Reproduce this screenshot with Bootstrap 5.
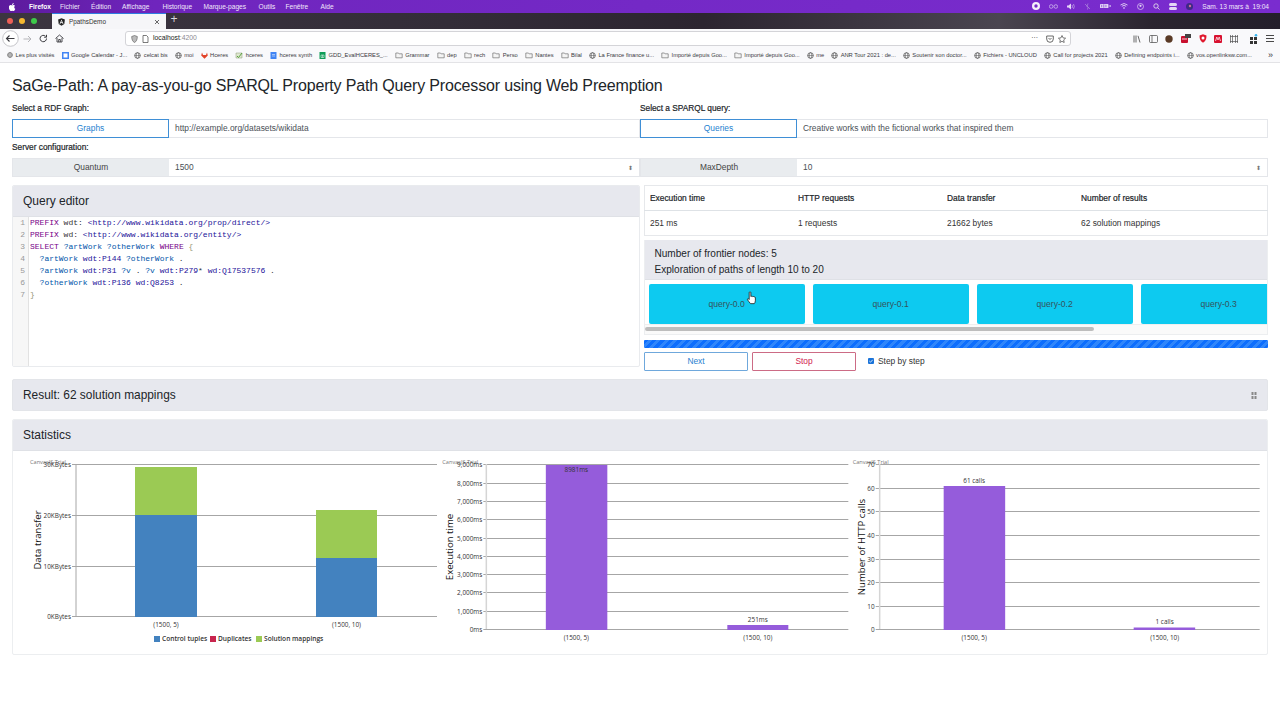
<!DOCTYPE html>
<html lang="en">
<head>
<meta charset="utf-8">
<title>PpathsDemo</title>
<link href="https://cdn.jsdelivr.net/npm/bootstrap@5.3.0/dist/css/bootstrap.min.css" rel="stylesheet">
<style>
html,body{height:720px;overflow:hidden;background:#fff}
body{font-family:"Liberation Sans",Arial,sans-serif;font-size:8.4px;color:#212529}
.mac-bar{height:13px;background:linear-gradient(90deg,#5c1a9c 0,#6f25bd 12%,#7429c6 50%,#7a2ccf 100%);color:#f0e6fb;font-size:6.6px;padding:0 9px;font-weight:500}
.mac-menu span{display:block}
.mac-menu .m1{width:31px;font-weight:700;color:#fff}
.mac-menu .m2{width:31px}.mac-menu .m3{width:40.5px}.mac-menu .m4{width:41px}.mac-menu .m5{width:55px}.mac-menu .m6{width:27px}.mac-menu .m7{width:35px}
.apple{width:20px}
.mac-status{gap:9px;padding-right:2px}
.mac-status svg{display:block}
.tab-strip{height:16px;background:linear-gradient(90deg,#3c3540 0,#332d38 35%,#2c2530 55%,#4a4550 78%,#2b2530 90%,#241f2b 100%)}
.lights{width:52px;padding-left:7px;gap:6px}
.lights i{display:block;width:6px;height:6px;border-radius:50%}
.l-r{background:#ed5f57}.l-y{background:#f5b72f}.l-g{background:#3ec94a}
.tab-on{width:114px;height:16px;background:#f6f6f8;border-top:1px solid #2e7ce0;color:#333;font-size:6.4px;padding:0 6px;gap:4px}
.tab-plus{color:#d8d8dc;font-size:12px;line-height:1;width:16px;text-align:center}
.tool-strip{height:19px;background:#f9f9fb;padding:0 0 0 2px}
.tool-left{gap:7px;width:123px}
.tool-left .back-btn{margin-right:-3px}
.url-field{height:15px;width:946px;border:1px solid #d4d4d8;border-radius:3px;background:#fff;font-size:6.8px;color:#222;padding:0 4px 0 5px;gap:4px}
.url-field b{font-weight:400;color:#8a8a8f}
.tool-right{gap:7.6px;margin-left:auto;padding-right:6px}
.book-strip{height:15px;background:#f9f9fb;border-bottom:1px solid #e3e3e6;font-size:5.75px;color:#39393f;padding:0 7px;gap:7px;white-space:nowrap;overflow:hidden}
.book-strip>span{display:flex;align-items:center;gap:2.5px}
.book-strip .more{margin-left:auto;font-size:9px;line-height:1}
.app-page{padding:0 12px}
.app-title{font-size:16px;letter-spacing:-.16px;font-weight:400;margin:0;height:40px;line-height:45px;color:#212529}
.lbl{font-size:8.3px;font-weight:500;color:#212529;height:12px;line-height:11px;-webkit-text-stroke:.2px #212529}
.field-row{height:19px}
.box-btn{width:157px;height:19px;background:#fff;color:#1f7fd0;border:1px solid #3f8fd6;display:flex;align-items:center;justify-content:center}
.box-gray{background:#e9ecef;color:#444;border:1px solid #e4e6ea;border-right:0}
.box-val{flex:1;height:19px;border:1px solid #e4e6ea;border-left:0;padding:0 6px;display:flex;align-items:center;color:#4a5056;justify-content:space-between}
.half{width:628px}
.arrows{color:#777;font-size:6px;line-height:1}
.gap-lbl{margin-top:4px}
.lbl-after{margin-bottom:4px}
.main-grid{margin-top:8px;gap:4px}
.pane-left{width:628px;height:182px;border:1px solid #e9ebee;border-radius:2px;overflow:hidden}
.pane-head{background:#e7e8ee;font-size:12px;color:#212529;border-bottom:1px solid #dfe1e6;height:31px;line-height:31px;padding:0 10px}
.code-wrap{height:150px}
.code-nums{width:16px;background:#f7f7f7;border-right:1px solid #e2e2e2;color:#999;text-align:right;padding:0 3px 0 0}
.code-nums,.code-text{font-family:"Liberation Mono",monospace;font-size:8px;line-height:12px}
.code-text{padding:0 0 0 1px;white-space:pre;color:#333}
.k{color:#770088}.u{color:#221199}.v{color:#0055aa}.a{color:#221199}.br{color:#999977}
.pane-right{width:624px}
.stat-table{margin:0;height:51px;border:1px solid #e6e8eb;table-layout:fixed;width:100%}
.stat-table th,.stat-table td{padding:0 0 0 5px;vertical-align:middle;border:0;font-size:8.4px}
.stat-table th{height:25px;font-weight:500;-webkit-text-stroke:.2px #212529;border-bottom:1px solid #dee2e6}
.stat-table td{height:25px;color:#333}
.c1{width:148.5px}.c2{width:149px}.c3{width:134px}
.front-box{margin-top:4px;border:1px solid #eceef0;border-top:0;height:95px;overflow:hidden}
.front-head{height:40px;background:#e7e8ee;padding:5.5px 9.5px;font-size:10.05px;line-height:16px;color:#212529;border-bottom:1px solid #dfe1e6}
.q-row{gap:8px;padding:4px 4px 0 3.6px;overflow:hidden;height:44px}
.q-btn{flex:0 0 156px;height:40px;background:#0dcaf0;border-radius:2px;color:#35535c;font-size:8.6px;border:0;padding:0}
.scroll-track{height:10px;background:#fafafa;border-top:1px solid #efefef;padding:1.5px 1px 1.5px 0}
.scroll-thumb{width:449px;height:4px;background:#bdbdbd;border-radius:2px}
.prog{height:8px;margin-top:5px;border-radius:1px;background-color:#0d6efd;background-image:repeating-linear-gradient(135deg,#0d6efd 0 3px,#2f86fb 3px 6px)}
.ctl-row{margin-top:4px;height:19px}
.ctl-btn{width:104px;height:19px;padding:0;font-size:8.4px;border-radius:1px;background:#fff}
.b-next{color:#1f7fd0;border:1px solid #6fa8dc}
.b-stop{color:#d1224f;border:1px solid #cc6b85;margin-left:4px}
.chk{margin-left:12px;gap:4px;color:#333}
.wide-card{border:1px solid #eceef0;border-radius:2px}
.result-card{margin-top:8px;height:32px;background:#e7e8ee;padding:1px 10px 0;font-size:11.9px;border-color:#e3e5e9}
.stats-card{margin-top:8px;height:236px;overflow:hidden}
.stats-card .pane-head{line-height:30px}
.chart-row{padding:0 6px 0 16px;height:204px}
.chart-cell{width:33.333%}
.chart-cell svg{display:block;overflow:visible}
.t6{font-family:"Open Sans","DejaVu Sans",sans-serif;font-size:6.4px;fill:#333}
.tr{font-family:"Open Sans",sans-serif;font-size:5.6px;fill:#777}
.tl{font-family:"Open Sans",sans-serif;font-size:9.6px;fill:#111}
.tb{font-family:"Open Sans",sans-serif;font-size:6.6px;font-weight:600;fill:#333}
.grid-l{stroke:#a6a6a6;stroke-width:1}
</style>
</head>
<body>
<svg width="0" height="0" class="position-absolute">
<defs>
<symbol id="globe" viewBox="0 0 10 10"><circle cx="5" cy="5" r="4" fill="none" stroke="#444" stroke-width="1"/><ellipse cx="5" cy="5" rx="1.8" ry="4" fill="none" stroke="#444" stroke-width=".7"/><path d="M1 5h8" stroke="#444" stroke-width=".7"/></symbol>
<symbol id="folder" viewBox="0 0 10 10"><path d="M1 2.5h3l1 1h4v5H1z" fill="#f4f4f4" stroke="#666" stroke-width=".8"/></symbol>
</defs>
</svg>

<div class="mac-bar d-flex align-items-center justify-content-between">
  <div class="mac-menu d-flex align-items-center">
    <span class="apple"><svg width="7" height="8" viewBox="0 0 14 16"><path d="M10.5 8.5c0-2 1.6-2.9 1.7-3-1-1.4-2.4-1.6-2.9-1.6-1.2-.1-2.4.7-3 .7s-1.600-.7-2.600-.7C2.300 4 1 4.800.3 6c-1.400 2.400-.4 6 1 8 .7 1 1.500 2 2.500 2s1.400-.6 2.600-.6 1.600.6 2.700.6 1.800-1 2.400-2c.8-1.100 1.100-2.200 1.100-2.300-.1 0-2.100-.8-2.100-3.200zM8.600 2.600C9.100 2 9.500 1 9.400 0c-.9 0-1.900.6-2.500 1.300-.5.6-1 1.600-.9 2.500 1 .1 2-.5 2.600-1.200z" fill="#fff"/></svg></span>
    <span class="m1">Firefox</span><span class="m2">Fichier</span><span class="m2">Édition</span><span class="m3">Affichage</span><span class="m4">Historique</span><span class="m5">Marque-pages</span><span class="m6">Outils</span><span class="m7">Fenêtre</span><span>Aide</span>
  </div>
  <div class="mac-status d-flex align-items-center">
    <svg width="8" height="8" viewBox="0 0 8 8"><circle cx="4" cy="4" r="4" fill="#f4f0fa"/><circle cx="4" cy="4" r="1.700" fill="#7429c6"/></svg>
    <svg width="9" height="6" viewBox="0 0 9 6"><circle cx="2.200" cy="3.500" r="1.800" fill="none" stroke="#d9c8f0" stroke-width=".7"/><circle cx="6.800" cy="3.500" r="1.800" fill="none" stroke="#d9c8f0" stroke-width=".7"/></svg>
    <svg width="8" height="7" viewBox="0 0 8 7"><path d="M0 2.500h1.500L4 .5v6L1.500 4.500H0z" fill="#e3d6f5"/><path d="M5 2q1 1.500 0 3M6.500 1q1.500 2.500 0 5" stroke="#d9c8f0" stroke-width=".6" fill="none"/></svg>
    <svg width="7" height="7" viewBox="0 0 7 7"><path d="M1 1l5 5M4 0.500L3 3.500l1 1-.500 2" stroke="#b89ae0" stroke-width=".6" fill="none"/></svg>
    <svg width="11" height="6" viewBox="0 0 13 6"><rect x="0" y="0.500" width="10" height="5" rx="1" fill="#e3d6f5"/><path d="M2 1.500v3M4.500 1v4M7 1.500v3" stroke="#7429c6" stroke-width=".8"/><path d="M11 2h2v2h-2z" fill="#cdb8ec"/></svg>
    <svg width="8" height="6" viewBox="0 0 8 6"><path d="M.5 2q3.500-3 7 0M1.800 3.300q2.200-1.800 4.400 0" stroke="#f0e8fa" stroke-width=".8" fill="none"/><circle cx="4" cy="5" r=".8" fill="#f0e8fa"/></svg>
    <svg width="7" height="7" viewBox="0 0 7 7"><circle cx="3.500" cy="3.500" r="3" fill="none" stroke="#e3d6f5" stroke-width=".7"/><circle cx="3.500" cy="2.800" r="1.100" fill="#e3d6f5"/></svg>
    <svg width="7" height="7" viewBox="0 0 7 7"><circle cx="3" cy="3" r="2.200" fill="none" stroke="#eee" stroke-width=".8"/><path d="M4.700 4.700L6.500 6.500" stroke="#eee" stroke-width=".8"/></svg>
    <svg width="8" height="7" viewBox="0 0 8 7"><rect x="0" y="0" width="8" height="3" rx="1.500" fill="#e3d6f5"/><rect x="0" y="4" width="8" height="3" rx="1.500" fill="#e3d6f5"/></svg>
    <svg width="7" height="7" viewBox="0 0 7 7"><circle cx="3.500" cy="3.500" r="3.500" fill="#3d2a85"/><circle cx="4" cy="3" r="1.200" fill="#d06a9a"/></svg>
    <span>Sam. 13 mars à&nbsp; 19:04</span>
  </div>
</div>

<div class="tab-strip d-flex">
  <div class="lights d-flex align-items-center"><i class="l-r"></i><i class="l-y"></i><i class="l-g"></i></div>
  <div class="tab-on d-flex align-items-center">
    <svg width="7" height="8" viewBox="0 0 10 11"><path d="M5 0L.2 1.800 1 8.200 5 11l4-2.800.8-6.400z" fill="#222"/><path d="M5 2L2.200 8.300h1l.6-1.400h2.400l.6 1.400h1zM4.200 6L5 4l.8 2z" fill="#fff"/></svg>
    <span class="flex-grow-1">PpathsDemo</span>
    <svg width="6" height="6" viewBox="0 0 6 6"><path d="M1 1l4 4M5 1L1 5" stroke="#444" stroke-width=".8"/></svg>
  </div>
  <div class="tab-plus">+</div>
</div>

<div class="tool-strip d-flex align-items-center">
  <div class="tool-left d-flex align-items-center">
    <svg class="back-btn" width="17" height="17" viewBox="0 0 17 17"><circle cx="8.500" cy="8.500" r="7.800" fill="#fff" stroke="#b8b8bc" stroke-width=".8"/><path d="M12.500 8.500h-8M7.500 5.500l-3 3 3 3" fill="none" stroke="#3a3a3f" stroke-width="1.100"/></svg>
    <svg width="9" height="8" viewBox="0 0 9 8"><path d="M.5 4h7.500M5 1l3 3-3 3" fill="none" stroke="#b5b5b9" stroke-width="1"/></svg>
    <svg width="9" height="9" viewBox="0 0 9 9"><path d="M7.500 4.500a3.200 3.200 0 1 1-1-2.300M7.500 .8v2.400H5.100" fill="none" stroke="#3a3a3f" stroke-width="1"/></svg>
    <svg width="9" height="9" viewBox="0 0 9 9"><path d="M.5 4.500L4.500 1l4 3.500M2 4v4h5V4M3.700 8V5.500h1.600V8" fill="none" stroke="#3a3a3f" stroke-width=".9"/></svg>
  </div>
  <div class="url-field d-flex align-items-center">
    <svg width="7" height="8" viewBox="0 0 7 8"><path d="M3.500 .5L.7 1.500c0 3 .8 5 2.800 6 2-1 2.800-3 2.800-6z" fill="#bbb" stroke="#555" stroke-width=".6"/></svg>
    <svg width="7" height="8" viewBox="0 0 7 8"><path d="M1 .5h3.500L6 2v5.500H1z" fill="none" stroke="#444" stroke-width=".7"/></svg>
    <span class="flex-grow-1">localhost<b>:4200</b></span>
    <span>···</span>
    <svg class="ms-1" width="8" height="8" viewBox="0 0 8 8"><path d="M.7 1h6.600v3a3.300 3.300 0 0 1-6.600 0z" fill="none" stroke="#444" stroke-width=".8"/><path d="M2.500 3l1.500 1.500L5.500 3" fill="none" stroke="#444" stroke-width=".8"/></svg>
    <svg width="8" height="8" viewBox="0 0 8 8"><path d="M4 .5l1.100 2.400 2.500.3-1.900 1.700.5 2.600L4 6.300 1.800 7.500l.5-2.600L.4 3.200l2.500-.3z" fill="none" stroke="#444" stroke-width=".7"/></svg>
  </div>
  <div class="tool-right d-flex align-items-center">
    <svg width="8" height="8" viewBox="0 0 8 8"><path d="M1 .5v7M3 .5v7M5 .8l2 6.700" stroke="#444" stroke-width=".8"/></svg>
    <svg width="9" height="8" viewBox="0 0 9 8"><rect x=".5" y=".5" width="8" height="7" rx="1" fill="none" stroke="#444" stroke-width=".7"/><path d="M3 .5v7" stroke="#444" stroke-width=".7"/></svg>
    <svg width="8" height="8" viewBox="0 0 8 8"><circle cx="4" cy="4" r="3.700" fill="#5a3a26"/></svg>
    <svg width="10" height="10" viewBox="0 0 10 10"><rect y="2" width="7" height="7" rx="1" fill="#c8102e"/><rect x="4" y="0" width="6" height="4" fill="#444"/><path d="M1 5h5" stroke="#fff" stroke-width=".8"/></svg>
    <svg width="8" height="9" viewBox="0 0 8 9"><path d="M4 .2L.5 1.500c0 3.500 1 6 3.500 7.300 2.500-1.300 3.500-3.800 3.500-7.300z" fill="#e0182d"/><circle cx="4" cy="4" r="1.500" fill="#fff"/></svg>
    <svg width="8" height="8" viewBox="0 0 8 8"><rect width="8" height="8" rx="1" fill="#d8112f"/><path d="M1.500 6l1.300-4L4 5l1.200-3 1.300 4" fill="none" stroke="#fff" stroke-width=".7"/></svg>
    <svg width="8" height="8" viewBox="0 0 8 8"><path d="M.5 0v8M2.500 0v8M5.500 0v8M7.500 0v8M0 1.500h8M0 6.500h8" stroke="#555" stroke-width=".7"/></svg>
    <svg class="ms-1" width="9" height="10" viewBox="0 0 9 10"><rect x="1" y="3" width="3" height="3" fill="#333"/><rect x="5" y="3" width="3" height="3" fill="#333"/><rect x="1" y="7" width="3" height="3" fill="#333"/><rect x="5" y="7" width="3" height="3" fill="#333"/><circle cx="7" cy="1.300" r="1.300" fill="#3ab4ee"/></svg>
    <svg width="8" height="7" viewBox="0 0 8 7"><path d="M0 .5h8M0 3.500h8M0 6.500h8" stroke="#333" stroke-width=".9"/></svg>
  </div>
</div>

<div class="book-strip d-flex align-items-center">
  <span><svg width="6" height="6"><use href="#globe"/></svg>Les plus visités</span>
  <span><svg width="7" height="7" viewBox="0 0 7 7"><rect width="7" height="7" fill="#4285f4"/><rect x="1.500" y="1.500" width="4" height="4" fill="#fff"/></svg>Google Calendar - J...</span>
  <span><svg width="7" height="7"><use href="#globe"/></svg>celcat bis</span>
  <span><svg width="7" height="7"><use href="#globe"/></svg>moi</span>
  <span><svg width="7" height="7" viewBox="0 0 7 7"><path d="M3.500 6.800L.2 3.500 1 .5l1 2.500h3l1-2.500.8 3z" fill="#e24329"/></svg>Hceres</span>
  <span><svg width="8" height="7" viewBox="0 0 8 7"><path d="M1 1h6v5H1z" fill="#dfe8d0" stroke="#8a9a70" stroke-width=".5"/><path d="M2 4l1.500 1.500L7 1" fill="none" stroke="#4a9a30" stroke-width=".9"/></svg>hceres</span>
  <span><svg width="7" height="7" viewBox="0 0 7 7"><rect x=".5" width="6" height="7" fill="#4285f4"/><path d="M2 2.500h3M2 4h3" stroke="#fff" stroke-width=".5"/></svg>hceres synth</span>
  <span><svg width="7" height="7" viewBox="0 0 7 7"><rect x=".5" width="6" height="7" fill="#0f9d58"/><path d="M2 3h3v2.500H2zM3.500 3v2.500" fill="none" stroke="#fff" stroke-width=".5"/></svg>GDD_EvalHCERES_...</span>
  <span><svg width="8" height="8"><use href="#folder"/></svg>Grammar</span>
  <span><svg width="8" height="8"><use href="#folder"/></svg>dep</span>
  <span><svg width="8" height="8"><use href="#folder"/></svg>rech</span>
  <span><svg width="8" height="8"><use href="#folder"/></svg>Perso</span>
  <span><svg width="8" height="8"><use href="#folder"/></svg>Nantes</span>
  <span><svg width="8" height="8"><use href="#folder"/></svg>Bilal</span>
  <span><svg width="7" height="7"><use href="#globe"/></svg>La France finance u...</span>
  <span><svg width="8" height="8"><use href="#folder"/></svg>Importé depuis Goo...</span>
  <span><svg width="8" height="8"><use href="#folder"/></svg>Importé depuis Goo...</span>
  <span><svg width="7" height="7"><use href="#globe"/></svg>me</span>
  <span><svg width="7" height="7"><use href="#globe"/></svg>ANR Tour 2021 : de...</span>
  <span><svg width="7" height="7"><use href="#globe"/></svg>Soutenir son doctor...</span>
  <span><svg width="7" height="7"><use href="#globe"/></svg>Fichiers - UNCLOUD</span>
  <span><svg width="7" height="7"><use href="#globe"/></svg>Call for projects 2021</span>
  <span><svg width="7" height="7"><use href="#globe"/></svg>Defining endpoints i...</span>
  <span><svg width="7" height="7"><use href="#globe"/></svg>vos.openlinksw.com...</span>
  <span class="more">»</span>
</div>

<main class="app-page">
  <h1 class="app-title">SaGe-Path: A pay-as-you-go SPARQL Property Path Query Processor using Web Preemption</h1>
  <div class="d-flex">
    <div class="half">
      <div class="lbl lbl-after">Select a RDF Graph:</div>
      <div class="d-flex field-row"><div class="box-btn">Graphs</div><div class="box-val">http://example.org/datasets/wikidata</div></div>
    </div>
    <div class="half">
      <div class="lbl lbl-after">Select a SPARQL query:</div>
      <div class="d-flex field-row"><div class="box-btn">Queries</div><div class="box-val">Creative works with the fictional works that inspired them</div></div>
    </div>
  </div>
  <div class="lbl gap-lbl lbl-after">Server configuration:</div>
  <div class="d-flex">
    <div class="half d-flex field-row"><div class="box-btn box-gray">Quantum</div><div class="box-val">1500<span class="arrows">⬍</span></div></div>
    <div class="half d-flex field-row"><div class="box-btn box-gray">MaxDepth</div><div class="box-val">10<span class="arrows">⬍</span></div></div>
  </div>

  <div class="d-flex main-grid">
    <section class="pane-left">
      <div class="pane-head">Query editor</div>
      <div class="d-flex code-wrap">
        <div class="code-nums">1<br>2<br>3<br>4<br>5<br>6<br>7</div>
        <div class="code-text"><span class="k">PREFIX</span> wdt: <span class="u">&lt;http://www.wikidata.org/prop/direct/&gt;</span>
<span class="k">PREFIX</span> wd: <span class="u">&lt;http://www.wikidata.org/entity/&gt;</span>
<span class="k">SELECT</span> <span class="v">?artWork</span> <span class="v">?otherWork</span> <span class="k">WHERE</span> <span class="br">{</span>
  <span class="v">?artWork</span> <span class="a">wdt:P144</span> <span class="v">?otherWork</span> .
  <span class="v">?artWork</span> <span class="a">wdt:P31</span> <span class="v">?v</span> . <span class="v">?v</span> <span class="a">wdt:P279</span>* <span class="a">wd:Q17537576</span> .
  <span class="v">?otherWork</span> <span class="a">wdt:P136</span> <span class="a">wd:Q8253</span> .
<span class="br">}</span></div>
      </div>
    </section>
    <section class="pane-right">
      <table class="table stat-table">
        <thead><tr><th class="c1">Execution time</th><th class="c2">HTTP requests</th><th class="c3">Data transfer</th><th>Number of results</th></tr></thead>
        <tbody><tr><td>251 ms</td><td>1 requests</td><td>21662 bytes</td><td>62 solution mappings</td></tr></tbody>
      </table>
      <div class="front-box">
        <div class="front-head">Number of frontier nodes: 5<br>Exploration of paths of length 10 to 20</div>
        <div class="q-row d-flex position-relative">
          <button class="q-btn">query-0.0</button><button class="q-btn">query-0.1</button><button class="q-btn">query-0.2</button><button class="q-btn">query-0.3</button>
          <svg class="position-absolute top-0 start-0 mt-1" width="124" height="30" viewBox="0 0 124 30"><path transform="translate(102,7) scale(1.1)" d="M2 1.500c0-1 1.500-1 1.500 0v3.500l.5-.2c.6-.2 1 0 1.100.3.600-.3 1.100-.1 1.300.3.600-.2 1.100 0 1.200.5v3c0 1.200-.6 2-1 2.600H3.200C2.500 10.500 1 9 .5 8c-.4-.8.300-1.300 1-.8l.5.5z" fill="#fff" stroke="#111" stroke-width=".7"/></svg>
        </div>
        <div class="scroll-track"><div class="scroll-thumb"></div></div>
      </div>
      <div class="prog"></div>
      <div class="d-flex align-items-center ctl-row">
        <button class="btn ctl-btn b-next">Next</button>
        <button class="btn ctl-btn b-stop">Stop</button>
        <div class="d-flex align-items-center chk"><svg width="6" height="6" viewBox="0 0 6 6"><rect width="6" height="6" rx="1" fill="#1a73d9"/><path d="M1.300 3l1.200 1.200L4.700 1.800" fill="none" stroke="#fff" stroke-width=".8"/></svg><span>Step by step</span></div>
      </div>
    </section>
  </div>

  <section class="wide-card result-card d-flex align-items-center justify-content-between">
    <span>Result: 62 solution mappings</span>
    <svg width="6" height="7" viewBox="0 0 6 7"><path d="M.5 0h2v3h-2zM3.500 0h2v3h-2zM.5 4h2v3h-2zM3.500 4h2v3h-2z" fill="#888"/></svg>
  </section>

  <section class="wide-card stats-card">
    <div class="pane-head">Statistics</div>
    <div class="d-flex chart-row">
      <div class="chart-cell">
        <svg width="411" height="204" viewBox="29 451 411 204">
          <text x="30" y="463.500" class="tr">CanvasJS Trial</text>
          <path class="grid-l" d="M72 464.500H437M72 515.500H437M72 566.500H437M72 616.500H437M76 464V617"/>
          <rect x="135" y="467" width="62" height="48" fill="#9bca54"/><rect x="135" y="515" width="62" height="102" fill="#4382bf"/>
          <rect x="316" y="510" width="61" height="48" fill="#9bca54"/><rect x="316" y="558" width="61" height="59" fill="#4382bf"/>
          <g class="t6" text-anchor="end"><text x="71" y="467">30KBytes</text><text x="71" y="518">20KBytes</text><text x="71" y="568.500">10KBytes</text><text x="71" y="619">0KBytes</text></g>
          <text class="tl" transform="translate(41,540) rotate(-90)" text-anchor="middle">Data transfer</text>
          <g class="t6" text-anchor="middle"><text x="166" y="627">(1500, 5)</text><text x="346.500" y="627">(1500, 10)</text></g>
          <rect x="154" y="636" width="6" height="6" fill="#4382bf"/><text x="162" y="641" class="tb">Control tuples</text>
          <rect x="210" y="636" width="6" height="6" fill="#c8254e"/><text x="218" y="641" class="tb">Duplicates</text>
          <rect x="256" y="636" width="6" height="6" fill="#9bca54"/><text x="264" y="641" class="tb">Solution mappings</text>
        </svg>
      </div>
      <div class="chart-cell">
        <svg width="411" height="204" viewBox="439.670 451 411 204">
          <text x="442" y="463.500" class="tr">CanvasJS Trial</text>
          <path class="grid-l" d="M483 464.500H848M483 483.500H848M483 501.500H848M483 519.500H848M483 538.500H848M483 556.500H848M483 574.500H848M483 592.500H848M483 611.500H848M483 629.500H848"/>
          <path d="M486 464V629" stroke="#d5d5d5" stroke-width="1.500"/>
          <rect x="545.500" y="465" width="61.500" height="165" fill="#955cdb"/>
          <rect x="727" y="625" width="61" height="5" fill="#955cdb"/>
          <g class="t6" text-anchor="end"><text x="482" y="467">9,000ms</text><text x="482" y="486">8,000ms</text><text x="482" y="504">7,000ms</text><text x="482" y="522">6,000ms</text><text x="482" y="541">5,000ms</text><text x="482" y="559">4,000ms</text><text x="482" y="577">3,000ms</text><text x="482" y="595">2,000ms</text><text x="482" y="614">1,000ms</text><text x="482" y="632">0ms</text></g>
          <g class="t6" text-anchor="middle"><text x="576" y="472">8981ms</text><text x="757.500" y="622">251ms</text><text x="576" y="640">(1500, 5)</text><text x="757.500" y="640">(1500, 10)</text></g>
          <text class="tl" transform="translate(453,547) rotate(-90)" text-anchor="middle">Execution time</text>
        </svg>
      </div>
      <div class="chart-cell">
        <svg width="411" height="204" viewBox="850.330 451 411 204">
          <text x="853" y="463.500" class="tr">CanvasJS Trial</text>
          <path class="grid-l" d="M876 464.500H1260M876 488.500H1260M876 511.500H1260M876 535.500H1260M876 559.500H1260M876 582.500H1260M876 606.500H1260M876 629.500H1260"/>
          <path d="M880 464V629" stroke="#d5d5d5" stroke-width="1.500"/>
          <rect x="944" y="486" width="61.500" height="144" fill="#955cdb"/>
          <rect x="1134" y="627.500" width="61.500" height="2.500" fill="#955cdb"/>
          <g class="t6" text-anchor="end"><text x="875" y="467">70</text><text x="875" y="490.500">60</text><text x="875" y="514">50</text><text x="875" y="538">40</text><text x="875" y="562">30</text><text x="875" y="585">20</text><text x="875" y="609">10</text><text x="875" y="632">0</text></g>
          <g class="t6" text-anchor="middle"><text x="974.500" y="483">61 calls</text><text x="1165" y="624">1 calls</text><text x="974.500" y="640">(1500, 5)</text><text x="1165" y="640">(1500, 10)</text></g>
          <text class="tl" transform="translate(865,547) rotate(-90)" text-anchor="middle">Number of HTTP calls</text>
        </svg>
      </div>
    </div>
  </section>
</main>
<script src="https://cdn.jsdelivr.net/npm/bootstrap@5.3.0/dist/js/bootstrap.bundle.min.js"></script>
</body>
</html>
